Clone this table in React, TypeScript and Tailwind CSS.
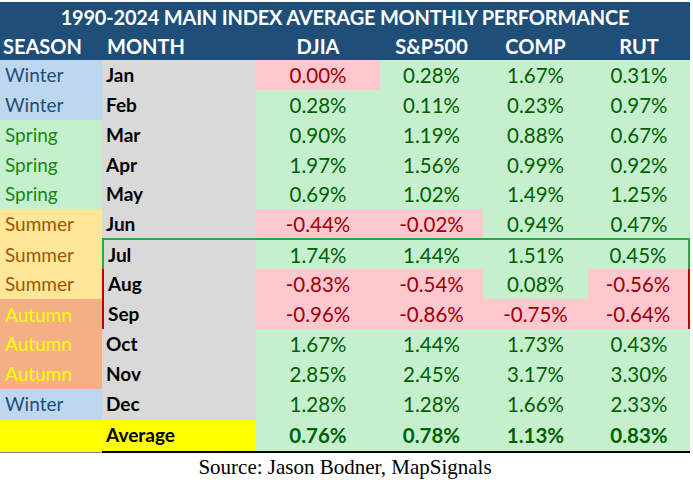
type Season = "Winter" | "Spring" | "Summer" | "Autumn";

type Row = {
  season: Season;
  month: string;
  values: string[];
  h: string;
  frame?: "green" | "redTop" | "redBottom";
};

const seasonStyle: Record<Season, string> = {
  Winter: "bg-[#bdd7ee] text-[#1f4e79]",
  Spring: "bg-[#c6efce] text-[#118a11]",
  Summer: "bg-[#ffe699] text-[#9c5700]",
  Autumn: "bg-[#f4b084] text-[#ffff00]",
};

const rows: Row[] = [
  { season: "Winter", month: "Jan", values: ["0.00%", "0.28%", "1.67%", "0.31%"], h: "h-[30px]" },
  { season: "Winter", month: "Feb", values: ["0.28%", "0.11%", "0.23%", "0.97%"], h: "h-[30px]" },
  { season: "Spring", month: "Mar", values: ["0.90%", "1.19%", "0.88%", "0.67%"], h: "h-[30px]" },
  { season: "Spring", month: "Apr", values: ["1.97%", "1.56%", "0.99%", "0.92%"], h: "h-[29px]" },
  { season: "Spring", month: "May", values: ["0.69%", "1.02%", "1.49%", "1.25%"], h: "h-[30px]" },
  { season: "Summer", month: "Jun", values: ["-0.44%", "-0.02%", "0.94%", "0.47%"], h: "h-[29px]" },
  { season: "Summer", month: "Jul", values: ["1.74%", "1.44%", "1.51%", "0.45%"], h: "h-[31px]", frame: "green" },
  { season: "Summer", month: "Aug", values: ["-0.83%", "-0.54%", "0.08%", "-0.56%"], h: "h-[30px]", frame: "redTop" },
  { season: "Autumn", month: "Sep", values: ["-0.96%", "-0.86%", "-0.75%", "-0.64%"], h: "h-[30px]", frame: "redBottom" },
  { season: "Autumn", month: "Oct", values: ["1.67%", "1.44%", "1.73%", "0.43%"], h: "h-[30px]" },
  { season: "Autumn", month: "Nov", values: ["2.85%", "2.45%", "3.17%", "3.30%"], h: "h-[30px]" },
  { season: "Winter", month: "Dec", values: ["1.28%", "1.28%", "1.66%", "2.33%"], h: "h-[30px]" },
];

const cols = "grid grid-cols-[102px_154px_124px_103px_105px_102px]";

// Jan DJIA 0.00% is shaded as a loss in the source sheet
const isRed = (v: string, month: string, i: number) =>
  v.startsWith("-") || (month === "Jan" && i === 0);

function frameClass(frame: Row["frame"], pos: "first" | "mid" | "last") {
  if (frame === "green") {
    return (
      "border-y-2 border-[#2ea44f] " +
      (pos === "first" ? "border-l-2 " : "") +
      (pos === "last" ? "border-r-2 " : "")
    );
  }
  if (frame === "redTop" || frame === "redBottom") {
    return (
      "border-[#c00000] " +
      (frame === "redBottom" ? "border-b-2 " : "") +
      (pos === "first" ? "border-l-2 " : "") +
      (pos === "last" ? "border-r-2 " : "")
    );
  }
  return "";
}

export default function App() {
  return (
    <div className="w-[693px] h-[480px] bg-white pt-[2px] font-['Lato',sans-serif]">
      <div className="w-[690px]">
        {/* header band */}
        <div className="bg-[#1f4e79] text-white font-bold">
          <div className="h-[29px] flex items-center justify-center text-[20px] tracking-[-0.2px]">
            1990-2024 MAIN INDEX AVERAGE MONTHLY PERFORMANCE
          </div>
          <div className={`${cols} h-[29px] items-center text-[20px]`}>
            <div className="pl-[3px]">SEASON</div>
            <div className="pl-[5px]">MONTH</div>
            <div className="text-center">DJIA</div>
            <div className="text-center">S&amp;P500</div>
            <div className="text-center">COMP</div>
            <div className="text-center">RUT</div>
          </div>
        </div>

        {rows.map((r) => (
          <div key={r.month} className={`${cols} ${r.h} text-[19px]`}>
            <div className={`flex items-center pl-[5px] ${seasonStyle[r.season]}`}>{r.season}</div>
            <div
              className={`flex items-center pl-[4px] bg-[#d9d9d9] text-black font-bold ${frameClass(r.frame, "first")}`}
            >
              {r.month}
            </div>
            {r.values.map((v, i) => (
              <div
                key={i}
                className={`flex items-center justify-center text-[20.5px] ${
                  isRed(v, r.month, i) ? "bg-[#ffc7ce] text-[#9c0006]" : "bg-[#c6efce] text-[#006100]"
                } ${frameClass(r.frame, i === 3 ? "last" : "mid")}`}
              >
                {v}
              </div>
            ))}
          </div>
        ))}

        {/* average row */}
        <div className={`${cols} h-[31px] text-[19px] font-bold border-t border-[#3aa35a]`}>
          <div className="bg-[#ffff00] border-b border-[#7f7f7f]" />
          <div className="flex items-center pl-[4px] bg-[#ffff00] text-black border-b-2 border-black">Average</div>
          {["0.76%", "0.78%", "1.13%", "0.83%"].map((v) => (
            <div
              key={v}
              className="flex items-center justify-center text-[20.5px] bg-[#c6efce] text-[#006100] border-b-2 border-black"
            >
              {v}
            </div>
          ))}
        </div>

        <div className="pt-[2px] text-center text-[21px] text-black font-['Liberation_Serif',serif]">
          Source: Jason Bodner, MapSignals
        </div>
      </div>
    </div>
  );
}
